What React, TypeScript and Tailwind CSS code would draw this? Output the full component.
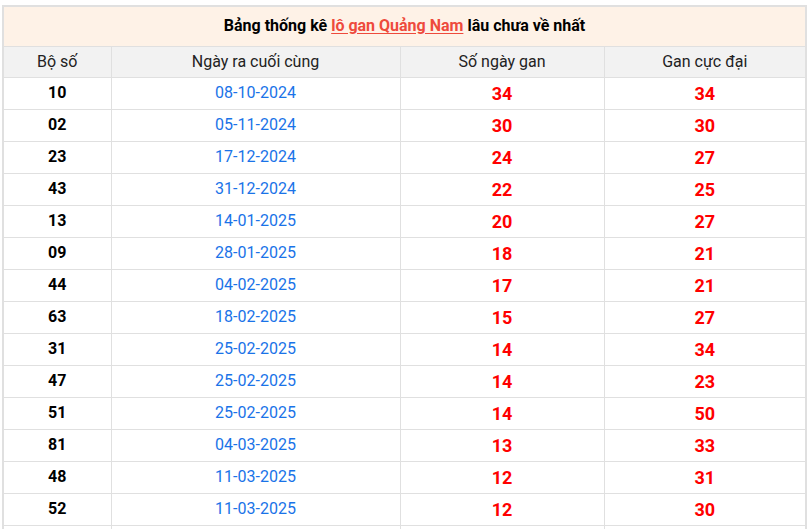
const rows: [string, string, number, number][] = [
  ["10", "08-10-2024", 34, 34],
  ["02", "05-11-2024", 30, 30],
  ["23", "17-12-2024", 24, 27],
  ["43", "31-12-2024", 22, 25],
  ["13", "14-01-2025", 20, 27],
  ["09", "28-01-2025", 18, 21],
  ["44", "04-02-2025", 17, 21],
  ["63", "18-02-2025", 15, 27],
  ["31", "25-02-2025", 14, 34],
  ["47", "25-02-2025", 14, 23],
  ["51", "25-02-2025", 14, 50],
  ["81", "04-03-2025", 13, 33],
  ["48", "11-03-2025", 12, 31],
  ["52", "11-03-2025", 12, 30],
  ["86", "11-03-2025", 12, 26],
];

export default function App() {
  return (
    <div
      className="min-h-screen bg-white px-[2px] pt-[5px]"
      style={{ fontFamily: "Roboto, 'Liberation Sans', sans-serif" }}
    >
      <table className="w-full border-collapse border-2 border-[#e0e0e0] text-center text-[16px] text-[#222]">
        <colgroup>
          <col className="w-[108px]" />
          <col className="w-[289px]" />
          <col className="w-[204px]" />
          <col />
        </colgroup>
        <thead>
          <tr className="h-[40px] bg-[#fef2e7]">
            <th colSpan={4} className="border border-[#e0e0e0] pb-[1px] text-[16px] font-bold text-black">
              Bảng thống kê{" "}
              <a href="#" className="text-[#ee4a3c] underline underline-offset-2">
                lô gan Quảng Nam
              </a>{" "}
              lâu chưa về nhất
            </th>
          </tr>
          <tr className="h-[31px] bg-[#f2f2f2]">
            <th className="border border-[#e0e0e0] font-normal">Bộ số</th>
            <th className="border border-[#e0e0e0] font-normal">Ngày ra cuối cùng</th>
            <th className="border border-[#e0e0e0] font-normal">Số ngày gan</th>
            <th className="border border-[#e0e0e0] font-normal">Gan cực đại</th>
          </tr>
        </thead>
        <tbody>
          {rows.map(([num, date, gan, max]) => (
            <tr key={num} className="h-[32px]">
              <td className="border border-[#e0e0e0] font-bold text-black">{num}</td>
              <td className="border border-[#e0e0e0] text-[#1a73e8]">{date}</td>
              <td className="border border-[#e0e0e0] text-[18px] font-bold text-[#ff0000]">{gan}</td>
              <td className="border border-[#e0e0e0] text-[18px] font-bold text-[#ff0000]">{max}</td>
            </tr>
          ))}
        </tbody>
      </table>
    </div>
  );
}
